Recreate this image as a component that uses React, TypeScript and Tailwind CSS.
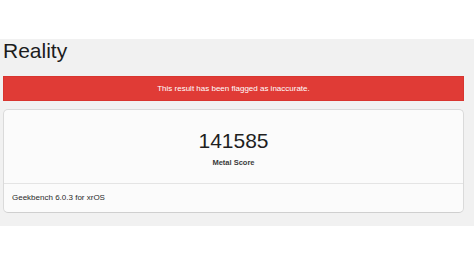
export default function App() {
  return (
    <div
      className="w-[474px] h-[266px] bg-white overflow-hidden"
      style={{ fontFamily: '"Liberation Sans", Arial, sans-serif' }}
    >
      <div className="h-[39px]" />
      <div className="h-[187px] bg-[#f1f1f1] pl-[3px] pr-[10px]">
        <h1 className="h-[37px] pt-[1px] text-[21px] leading-[21px] text-[#1c1c1c]">Reality</h1>
        <div className="h-[25px] bg-[#e03b36] border border-[#d8352f] flex items-center justify-center text-[8px] text-white">
          This result has been flagged as inaccurate.
        </div>
        <div className="mt-[8px] h-[104px] rounded-[5px] border border-[#dadada] border-b-[#cfcfcf] bg-[#fbfbfb] flex flex-col">
          <div className="h-[73px] flex flex-col items-center pt-[19px]">
            <div className="text-[21px] leading-[24px] text-[#1f1f1f]">141585</div>
            <div className="mt-[5px] text-[7.5px] leading-[10px] font-bold text-[#3a3a3a]">Metal Score</div>
          </div>
          <div className="h-px bg-[#e4e4e4]" />
          <div className="flex-1 flex items-center pl-[8px] text-[8px] text-[#2a2a2a]">
            Geekbench 6.0.3 for xrOS
          </div>
        </div>
      </div>
    </div>
  );
}
